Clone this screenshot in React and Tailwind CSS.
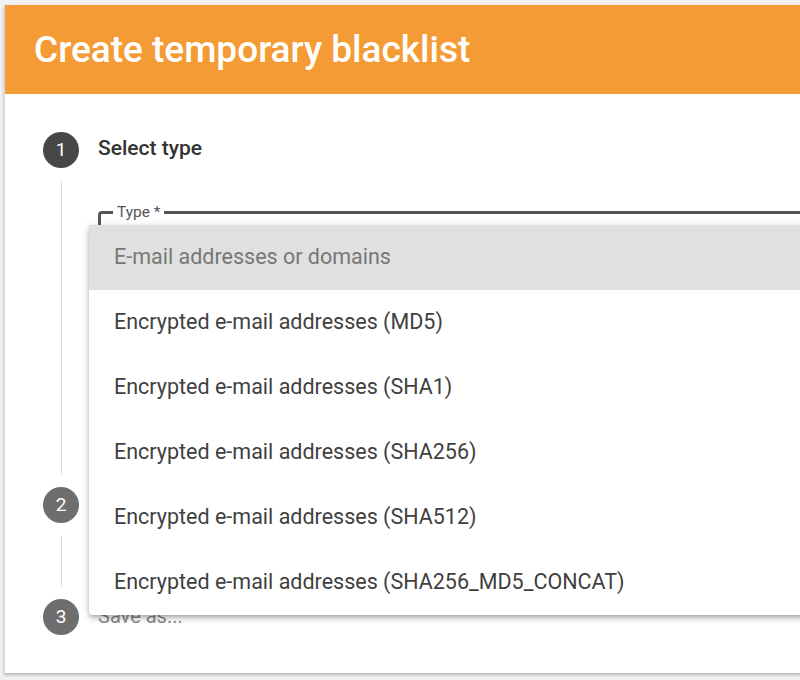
const options = [
  "E-mail addresses or domains",
  "Encrypted e-mail addresses (MD5)",
  "Encrypted e-mail addresses (SHA1)",
  "Encrypted e-mail addresses (SHA256)",
  "Encrypted e-mail addresses (SHA512)",
  "Encrypted e-mail addresses (SHA256_MD5_CONCAT)",
];

function StepCircle({ n, active }) {
  return (
    <div
      className={`w-[36px] h-[36px] shrink-0 rounded-full flex items-center justify-center text-white text-[19px] ${
        active ? "bg-[#474747]" : "bg-[#6e6e6e]"
      }`}
    >
      {n}
    </div>
  );
}

function Connector({ children, height }) {
  return (
    <div className="flex">
      <div className="w-[36px] shrink-0 flex justify-center py-[13px]">
        <div className="w-px bg-[#dcdcdc]" style={{ height }}></div>
      </div>
      <div className="flex-1 ml-[19px]">{children}</div>
    </div>
  );
}

export default function App() {
  return (
    <div
      className="relative w-[800px] h-[680px] overflow-hidden bg-[#f1f1f1] pt-[4px] pl-[4px]"
      style={{ fontFamily: "Roboto, 'Liberation Sans', sans-serif" }}
    >
      {/* CARD */}
      <div className="w-[830px] h-[668px] bg-white border-l border-[#d9d9d9] shadow-[0_2px_3px_rgba(0,0,0,0.25)]">
        <div className="h-[89px] bg-[#f59b35] flex items-center pl-[29px] mt-[1px]">
          <h1 className="text-white text-[37px] font-medium leading-none pb-[1px]">
            Create temporary blacklist
          </h1>
        </div>

        <div className="pl-[38px] pt-[38px]">
          {/* STEP 1 */}
          <div className="flex items-center h-[36px]">
            <StepCircle n="1" active />
            <span className="ml-[19px] text-[21px] font-medium text-[#333] pb-[2px]">Select type</span>
          </div>
          <Connector height="293px">
            <fieldset className="mt-[36px] border-[3px] border-[#555] rounded-[4px] pl-[12px] h-[140px]">
              <legend className="px-[4px] text-[15.5px] leading-[16px] text-[#555]">Type *</legend>
            </fieldset>
          </Connector>

          {/* STEP 2 */}
          <div className="flex items-center h-[36px]">
            <StepCircle n="2" />
          </div>
          <Connector height="50px" />

          {/* STEP 3 */}
          <div className="flex items-center h-[36px]">
            <StepCircle n="3" />
            <span className="ml-[19px] text-[20px] text-[#8a8a8a] pb-[2px]">Save as...</span>
          </div>
        </div>
      </div>

      {/* DROPDOWN */}
      <div className="absolute left-[89px] top-[225px] w-[740px] bg-white rounded-[4px] shadow-[0_2px_4px_-1px_rgba(0,0,0,0.2),0_4px_5px_0_rgba(0,0,0,0.14),0_1px_10px_0_rgba(0,0,0,0.12)]">
        {options.map((opt, i) => (
          <div
            key={opt}
            className={`h-[65px] flex items-center pl-[25px] pb-[1px] text-[21.5px] ${
              i === 0 ? "bg-[#e0e0e0] text-[#777]" : "text-[#3f3f3f]"
            }`}
          >
            {opt}
          </div>
        ))}
      </div>
    </div>
  );
}
